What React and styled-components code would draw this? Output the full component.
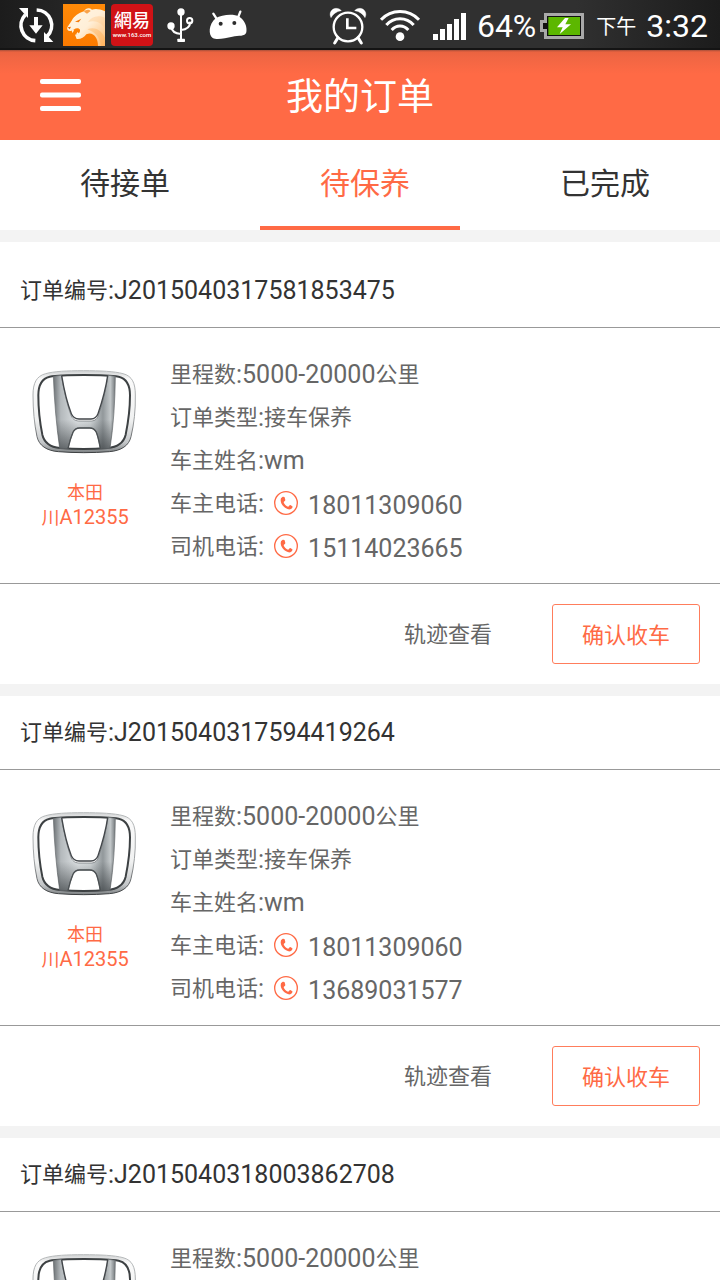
import React from "react";
import styled, { createGlobalStyle } from "styled-components";

const ORANGE = "#ff6a45";
const LATIN = `Roboto, "Noto Sans CJK SC", sans-serif`;
const CJK = `"Noto Sans CJK SC", sans-serif`;

const GlobalStyle = createGlobalStyle`
  *, *::before, *::after { box-sizing: border-box; }
  body { margin: 0; background: #fff; font-family: ${LATIN}; }
  button { border: 0; padding: 0; background: none; font: inherit; color: inherit; cursor: pointer; }
  h1, h2, p, ul { margin: 0; padding: 0; font-weight: 400; }
  ul { list-style: none; }
  svg { display: block; flex: none; }
`;

const Screen = styled.div`
  display: flex;
  flex-direction: column;
  height: 100vh;
  overflow: hidden;
`;

const StatusBar = styled.div`
  display: flex;
  flex: none;
  align-items: center;
  justify-content: space-between;
  height: 50px;
  padding: 0 12px 0 15px;
  color: #fff;
  background: linear-gradient(90deg, #1c1c1c 0%, #303030 20%, #303030 80%, #1c1c1c 100%);
  box-shadow: inset 0 -2px #141414;
`;

const StatusGroup = styled.div`
  display: flex;
  align-items: center;
  gap: ${(p) => p.$gap}px;
`;

const StatusText = styled.span`
  padding-top: 2px;
  font-family: ${(p) => (p.$cjk ? CJK : LATIN)};
  font-size: ${(p) => (p.$cjk ? 20 : 32)}px;
  line-height: 40px;
  font-weight: 400;
  white-space: nowrap;
`;

const AppBar = styled.header`
  display: grid;
  flex: none;
  grid-template-columns: 80px 1fr 80px;
  align-items: center;
  height: 90px;
  padding: 0 20px;
  color: #fff;
  background: linear-gradient(#a8503a 0, #ea6340 2px, #f16643 8px, ${ORANGE} 24px);
`;

const MenuButton = styled.button`
  display: flex;
  justify-content: center;
  width: 81px;
  height: 60px;
  align-items: center;
`;

const Title = styled.h1`
  padding-bottom: 2px;
  text-align: center;
  font: 400 37px/56px ${CJK};
`;

const Tabs = styled.nav`
  display: flex;
  flex: none;
  height: 90px;
  background: #fff;
`;

const Tab = styled.button`
  flex: 1;
  display: flex;
  flex-direction: column;
  padding: 0 20px;
  color: ${(p) => (p.$active ? ORANGE : "#333")};

  && {
    font: 400 30px/82px ${CJK};
  }
`;

const TabLabel = styled.span`
  align-self: stretch;
  padding: 0 0 4px 10px;
  text-align: center;
  border-bottom: 4px solid ${(p) => (p.$active ? ORANGE : "transparent")};
`;

const OrderList = styled.ul`
  flex: 1;
  min-height: 0;
  overflow-y: auto;
  scrollbar-width: none;
  border-top: 12px solid #f3f3f3;
  padding-top: 12px;
`;

const Card = styled.li`
  border-bottom: 12px solid #f3f3f3;
`;

const OrderNumber = styled.h2`
  display: flex;
  align-items: center;
  height: 74px;
  padding: 0 20px;
  border-bottom: 1px solid #999;
  color: #333;
  font-size: 25px;
  line-height: 43px;
  white-space: nowrap;
`;

const Cn = styled.span`
  padding-bottom: 4px;
  font-family: ${CJK};
  font-size: 22px;
`;

const CardBody = styled.div`
  display: flex;
  gap: 20px;
  min-height: 256px;
  padding: 25px 20px 15px;
  border-bottom: 1px solid #999;
`;

const Brand = styled.div`
  display: flex;
  flex-direction: column;
  align-items: center;
  width: 130px;
  padding-top: 16px;
  color: ${ORANGE};
  font-size: 20px;
  line-height: 24px;
`;

const BrandText = styled.div`
  padding-top: 24px;
  text-align: center;
`;

const BrandCn = styled.span`
  font-family: ${CJK};
  font-size: 18px;
`;

const Details = styled.div`
  flex: 1;
  color: #666;
  font-size: 25px;
  line-height: 43px;
`;

const DetailRow = styled.p`
  display: flex;
  align-items: center;
  height: 43px;
  white-space: nowrap;
`;

const PhoneLink = styled.a`
  display: flex;
  align-items: center;
  gap: 9px;
  padding-left: 9px;
  color: inherit;
  text-decoration: none;
`;

const PhoneNumber = styled.span`
  padding-top: 4px;
`;

const CardFooter = styled.div`
  display: flex;
  align-items: center;
  justify-content: flex-end;
  gap: 60px;
  height: 100px;
  padding: 0 20px;
  color: #666;
`;

const TrackButton = styled.button`
  && {
    padding-bottom: 4px;
    font: 400 22px/54px ${CJK};
  }
`;

const ConfirmButton = styled.button`
  && {
    padding: 0 29px 2px;
    border: 1px solid #ff7d5c;
    border-radius: 3px;
    color: ${ORANGE};
    font: 400 22px/56px ${CJK};
  }
`;

function SyncIcon() {
  return (
    <svg width="42" height="42" viewBox="45 12 126 126" fill="none">
      <path d="M76 44A46 46 0 0 0 106 122" stroke="#fff" strokeWidth="11" />
      <path d="M57 24H84V54Z" fill="#fff" />
      <path d="M110 30A46 46 0 0 1 141 109" stroke="#fff" strokeWidth="11" />
      <path d="M132 96V126H160Z" fill="#fff" />
      <path d="M102 51H114V76H128L108 101L88 76H102Z" fill="#fff" />
    </svg>
  );
}

function CheetahIcon() {
  return (
    <svg width="42" height="42" viewBox="189 12 126 126">
      <defs>
        <linearGradient id="fur" x1="0" y1="0" x2="1" y2="1">
          <stop offset="0" stopColor="#fff6e4" />
          <stop offset="0.5" stopColor="#ffefd8" />
          <stop offset="1" stopColor="#ffb96a" />
        </linearGradient>
        <linearGradient id="sky" x1="0" y1="0" x2="0" y2="1">
          <stop offset="0" stopColor="#ff8a08" />
          <stop offset="1" stopColor="#fb7a00" />
        </linearGradient>
      </defs>
      <rect x="189" y="12" width="126" height="126" fill="url(#sky)" />
      <path d="M315 34C299 27 287 25 276 29C268 22 257 24 252 34C235 40 224 47 215 62L202 82C200 89 204 94 212 93L222 88C229 83 236 84 240 89C241 98 235 103 225 104L230 117C242 118 252 113 259 103C277 94 294 110 294 138H315Z" fill="url(#fur)" />
      <path d="M315 53C292 44 275 50 264 66C288 60 305 68 315 88Z" fill="#ffc98a" opacity="0.4" />
      <path d="M262 88C283 80 301 88 315 113V138H303C300 112 286 96 262 88Z" fill="#ffa744" opacity="0.35" />
      <path d="M225 65L244 56L236 67Z" fill="#f47c0c" />
      <path d="M252 35C257 28 267 27 272 33L261 41Z" fill="#f9a24a" />
      <path d="M203 82L213 80L209 88Z" fill="#e96a00" />
      <path d="M214 91L218 99L223 88M227 104L233 96L237 101" fill="#fff2dd" />
    </svg>
  );
}

function NeteaseIcon() {
  return (
    <svg width="42" height="42" viewBox="0 0 42 42">
      <rect width="42" height="42" rx="4" fill="#d01216" />
      <text x="21" y="23" textAnchor="middle" fill="#fff" fontSize="18" fontWeight="500" fontFamily="'Noto Sans CJK TC', sans-serif">網易</text>
      <text x="21" y="33" textAnchor="middle" fill="#fff" fontSize="6" fontWeight="500" fontFamily="Roboto, sans-serif">www.163.com</text>
    </svg>
  );
}

function UsbIcon() {
  return (
    <svg width="42" height="42" viewBox="477 12 126 126" fill="none">
      <path d="M543 36V120M514 80C515 94 527 101 543 102M571 65C570 82 560 89 543 90" stroke="#fff" strokeWidth="6" />
      <circle cx="543" cy="36" r="11" fill="#fff" />
      <circle cx="513" cy="78" r="11" fill="#fff" />
      <circle cx="569" cy="62" r="8" stroke="#fff" strokeWidth="6" />
      <rect x="532" y="116" width="23" height="10" rx="2" fill="#fff" />
    </svg>
  );
}

function AndroidIcon() {
  return (
    <svg width="42" height="42" viewBox="621 12 126 126">
      <path d="M640 41L651 58M721 35L714 53" stroke="#fff" strokeWidth="7" strokeLinecap="round" />
      <path d="M647 55C665 44 700 40 718 50C735 62 742 80 739 97C735 111 716 106 697 110C676 114 652 121 638 114C625 105 625 74 647 55Z" fill="#fff" />
      <circle cx="662" cy="71" r="6" fill="#2c2c2c" />
      <circle cx="703" cy="69" r="6" fill="#2c2c2c" />
    </svg>
  );
}

function AlarmIcon() {
  return (
    <svg width="42" height="42" viewBox="21 12 126 126" fill="none" stroke="#fff">
      <circle cx="84" cy="81" r="43" strokeWidth="7" />
      <path d="M82 55V84H109" strokeWidth="8" />
      <path d="M54 113L44 129M114 113L124 129" strokeWidth="9" strokeLinecap="round" />
      <path d="M33 53C25 39 36 25 48 25C56 25 61 28 64 32C49 34 39 42 33 53ZM135 53C143 39 132 25 120 25C112 25 107 28 104 32C119 34 129 42 135 53Z" fill="#fff" strokeWidth="1" />
    </svg>
  );
}

function WifiIcon() {
  return (
    <svg width="42" height="42" viewBox="177 12 126 126" fill="none" stroke="#fff" strokeWidth="9">
      <path d="M183 59C214 26 266 26 297 59" />
      <path d="M199 75C221 50 259 50 281 75" />
      <path d="M215 90C229 74 251 74 265 90" />
      <circle cx="240" cy="110" r="13" fill="#fff" stroke="none" />
    </svg>
  );
}

function SignalIcon() {
  return (
    <svg width="36" height="42" viewBox="333 12 108 126" fill="#fff">
      <path d="M339 102H354V120H339ZM360 87H375V120H360ZM381 72H396V120H381ZM402 57H417V120H402ZM423 39H438V120H423Z" />
    </svg>
  );
}

function BatteryIcon() {
  return (
    <svg width="46" height="42" viewBox="663 12 138 126">
      <path d="M675 39H795V117H675V96H663V60H675Z" fill="#a9a9a9" />
      <path d="M684 48H786V108H684V87H672V69H684Z" fill="#111" />
      <rect x="688" y="51" width="95" height="54" fill="#5cb700" />
      <path d="M738 54L714 82H731L722 102L756 73H739L749 54Z" fill="#fff" />
    </svg>
  );
}

function MenuIcon() {
  return (
    <svg width="41" height="32" viewBox="0 0 41 32" fill="#fff">
      <rect width="41" height="5" rx="2" />
      <rect y="13.5" width="41" height="5" rx="2" />
      <rect y="27" width="41" height="5" rx="2" />
    </svg>
  );
}

function PhoneIcon() {
  return (
    <svg width="26" height="26" viewBox="339 453 78 78" fill="none">
      <circle cx="378" cy="489" r="34" stroke={ORANGE} strokeWidth="4" />
      <path d="M363 475C366 470 371 469 374 472L376 480C376 483 371 484 371 487C373 494 378 498 384 500C387 500 388 495 391 495L397 499C399 502 395 506 391 508C379 511 357 492 363 475Z" fill={ORANGE} />
    </svg>
  );
}

function HondaLogo() {
  return (
    <svg width="106" height="86" viewBox="96 87 318 258" role="img" aria-label="本田">
      <defs>
        <linearGradient id="frame" x1="0" y1="0" x2="0" y2="1">
          <stop offset="0" stopColor="#cfd1d2" />
          <stop offset="0.1" stopColor="#fafafa" />
          <stop offset="0.6" stopColor="#f0f1f1" />
          <stop offset="0.88" stopColor="#c3c6c8" />
          <stop offset="1" stopColor="#7c8082" />
        </linearGradient>
        <linearGradient id="rim" x1="0" y1="0" x2="0" y2="1">
          <stop offset="0" stopColor="#b8bbbc" />
          <stop offset="0.6" stopColor="#9da0a2" />
          <stop offset="1" stopColor="#3d4042" />
        </linearGradient>
        <linearGradient id="chrome" x1="0" y1="0" x2="1" y2="0">
          <stop offset="0" stopColor="#6d7275" />
          <stop offset="0.12" stopColor="#b4b9bc" />
          <stop offset="0.4" stopColor="#dfe3e5" />
          <stop offset="0.6" stopColor="#d3d8da" />
          <stop offset="0.8" stopColor="#92989b" />
          <stop offset="0.92" stopColor="#c3c8ca" />
          <stop offset="1" stopColor="#74797c" />
        </linearGradient>
        <linearGradient id="shade" x1="0" y1="0" x2="0" y2="1">
          <stop offset="0.6" stopColor="#33383b" stopOpacity="0" />
          <stop offset="1" stopColor="#33383b" stopOpacity="0.65" />
        </linearGradient>
      </defs>
      <path
        d="M250 92C200 92 162 94 137 101C109 108 99 130 99 165C99 210 103 252 111 290C117 317 140 332 175 335C225 339 278 339 328 335C364 332 387 317 393 290C402 252 407 210 406 165C406 130 397 108 369 101C344 94 300 92 250 92Z"
        fill="url(#frame)" stroke="url(#rim)" strokeWidth="3"
      />
      <path
        d="M252 105C207 105 170 106 149 110C124 116 115 134 115 166C115 210 120 250 127 284C133 309 150 321 180 324C225 328 278 328 322 324C354 321 371 309 377 284C384 250 390 210 390 166C390 134 381 116 356 110C333 106 297 105 252 105Z"
        fill="#fff" stroke="#3d4143" strokeWidth="6"
      />
      <path
        d="M160 109L184 106C191 148 201 192 212 223C217 237 224 242 236 243H274C286 242 292 237 296 223C307 190 318 148 324 106L346 109C345 185 341 255 330 325L301 327C298 308 294 290 289 277C285 268 279 264 269 264H239C229 264 223 268 219 277C213 291 208 308 204 326L179 325C169 255 163 185 160 109Z"
        fill="url(#chrome)" stroke="#65696c" strokeWidth="2"
      />
      <path
        d="M160 109L184 106C191 148 201 192 212 223C217 237 224 242 236 243H274C286 242 292 237 296 223C307 190 318 148 324 106L346 109C345 185 341 255 330 325L301 327C298 308 294 290 289 277C285 268 279 264 269 264H239C229 264 223 268 219 277C213 291 208 308 204 326L179 325C169 255 163 185 160 109Z"
        fill="url(#shade)"
      />
      <path d="M185 107C192 149 203 193 214 221C219 233 226 236 237 237H273C284 236 290 232 294 221C305 189 317 149 323 107" fill="none" stroke="#42464a" strokeWidth="4" />
      <path d="M204 326C208 308 213 291 219 277C223 268 229 264 239 264H269C279 264 285 268 289 277C294 290 298 308 301 326" fill="none" stroke="#4b5053" strokeWidth="4" />
    </svg>
  );
}

const orders = [
  { id: "J2015040317581853475", type: "接车保养", owner: "wm", ownerPhone: "18011309060", driverPhone: "15114023665", brand: "本田", plate: ["川", "A12355"] },
  { id: "J2015040317594419264", type: "接车保养", owner: "wm", ownerPhone: "18011309060", driverPhone: "13689031577", brand: "本田", plate: ["川", "A12355"] },
  { id: "J2015040318003862708" },
];

function Phone({ label, number }) {
  return (
    <DetailRow>
      <Cn>{label}</Cn>:
      <PhoneLink href={`tel:${number}`}>
        <PhoneIcon />
        <PhoneNumber>{number}</PhoneNumber>
      </PhoneLink>
    </DetailRow>
  );
}

function Order({ order }) {
  return (
    <Card>
      <OrderNumber><Cn>订单编号</Cn>:{order.id}</OrderNumber>
      <CardBody>
        <Brand>
          <HondaLogo />
          {order.plate && (
            <BrandText>
              <p><BrandCn>{order.brand}</BrandCn></p>
              <p><BrandCn>{order.plate[0]}</BrandCn>{order.plate[1]}</p>
            </BrandText>
          )}
        </Brand>
        <Details>
          <DetailRow><Cn>里程数</Cn>:5000-20000<Cn>公里</Cn></DetailRow>
          {order.type && (
            <>
              <DetailRow><Cn>订单类型</Cn>:<Cn>{order.type}</Cn></DetailRow>
              <DetailRow><Cn>车主姓名</Cn>:{order.owner}</DetailRow>
              <Phone label="车主电话" number={order.ownerPhone} />
              <Phone label="司机电话" number={order.driverPhone} />
            </>
          )}
        </Details>
      </CardBody>
      {order.type && (
        <CardFooter>
          <TrackButton type="button">轨迹查看</TrackButton>
          <ConfirmButton type="button">确认收车</ConfirmButton>
        </CardFooter>
      )}
    </Card>
  );
}

export default function App() {
  const [active, setActive] = React.useState("待保养");
  return (
    <Screen>
      <GlobalStyle />
      <StatusBar>
        <StatusGroup $gap={6}>
          <SyncIcon />
          <CheetahIcon />
          <NeteaseIcon />
          <UsbIcon />
          <AndroidIcon />
        </StatusGroup>
        <StatusGroup $gap={10}>
          <AlarmIcon />
          <WifiIcon />
          <SignalIcon />
          <StatusGroup $gap={4}>
            <StatusText>64%</StatusText>
            <BatteryIcon />
          </StatusGroup>
          <StatusText $cjk>下午</StatusText>
          <StatusText>3:32</StatusText>
        </StatusGroup>
      </StatusBar>
      <AppBar>
        <MenuButton type="button" aria-label="菜单"><MenuIcon /></MenuButton>
        <Title>我的订单</Title>
      </AppBar>
      <Tabs>
        {["待接单", "待保养", "已完成"].map((name) => (
          <Tab key={name} type="button" $active={name === active} onClick={() => setActive(name)}>
            <TabLabel $active={name === active}>{name}</TabLabel>
          </Tab>
        ))}
      </Tabs>
      <OrderList>
        {orders.map((order) => <Order key={order.id} order={order} />)}
      </OrderList>
    </Screen>
  );
}
